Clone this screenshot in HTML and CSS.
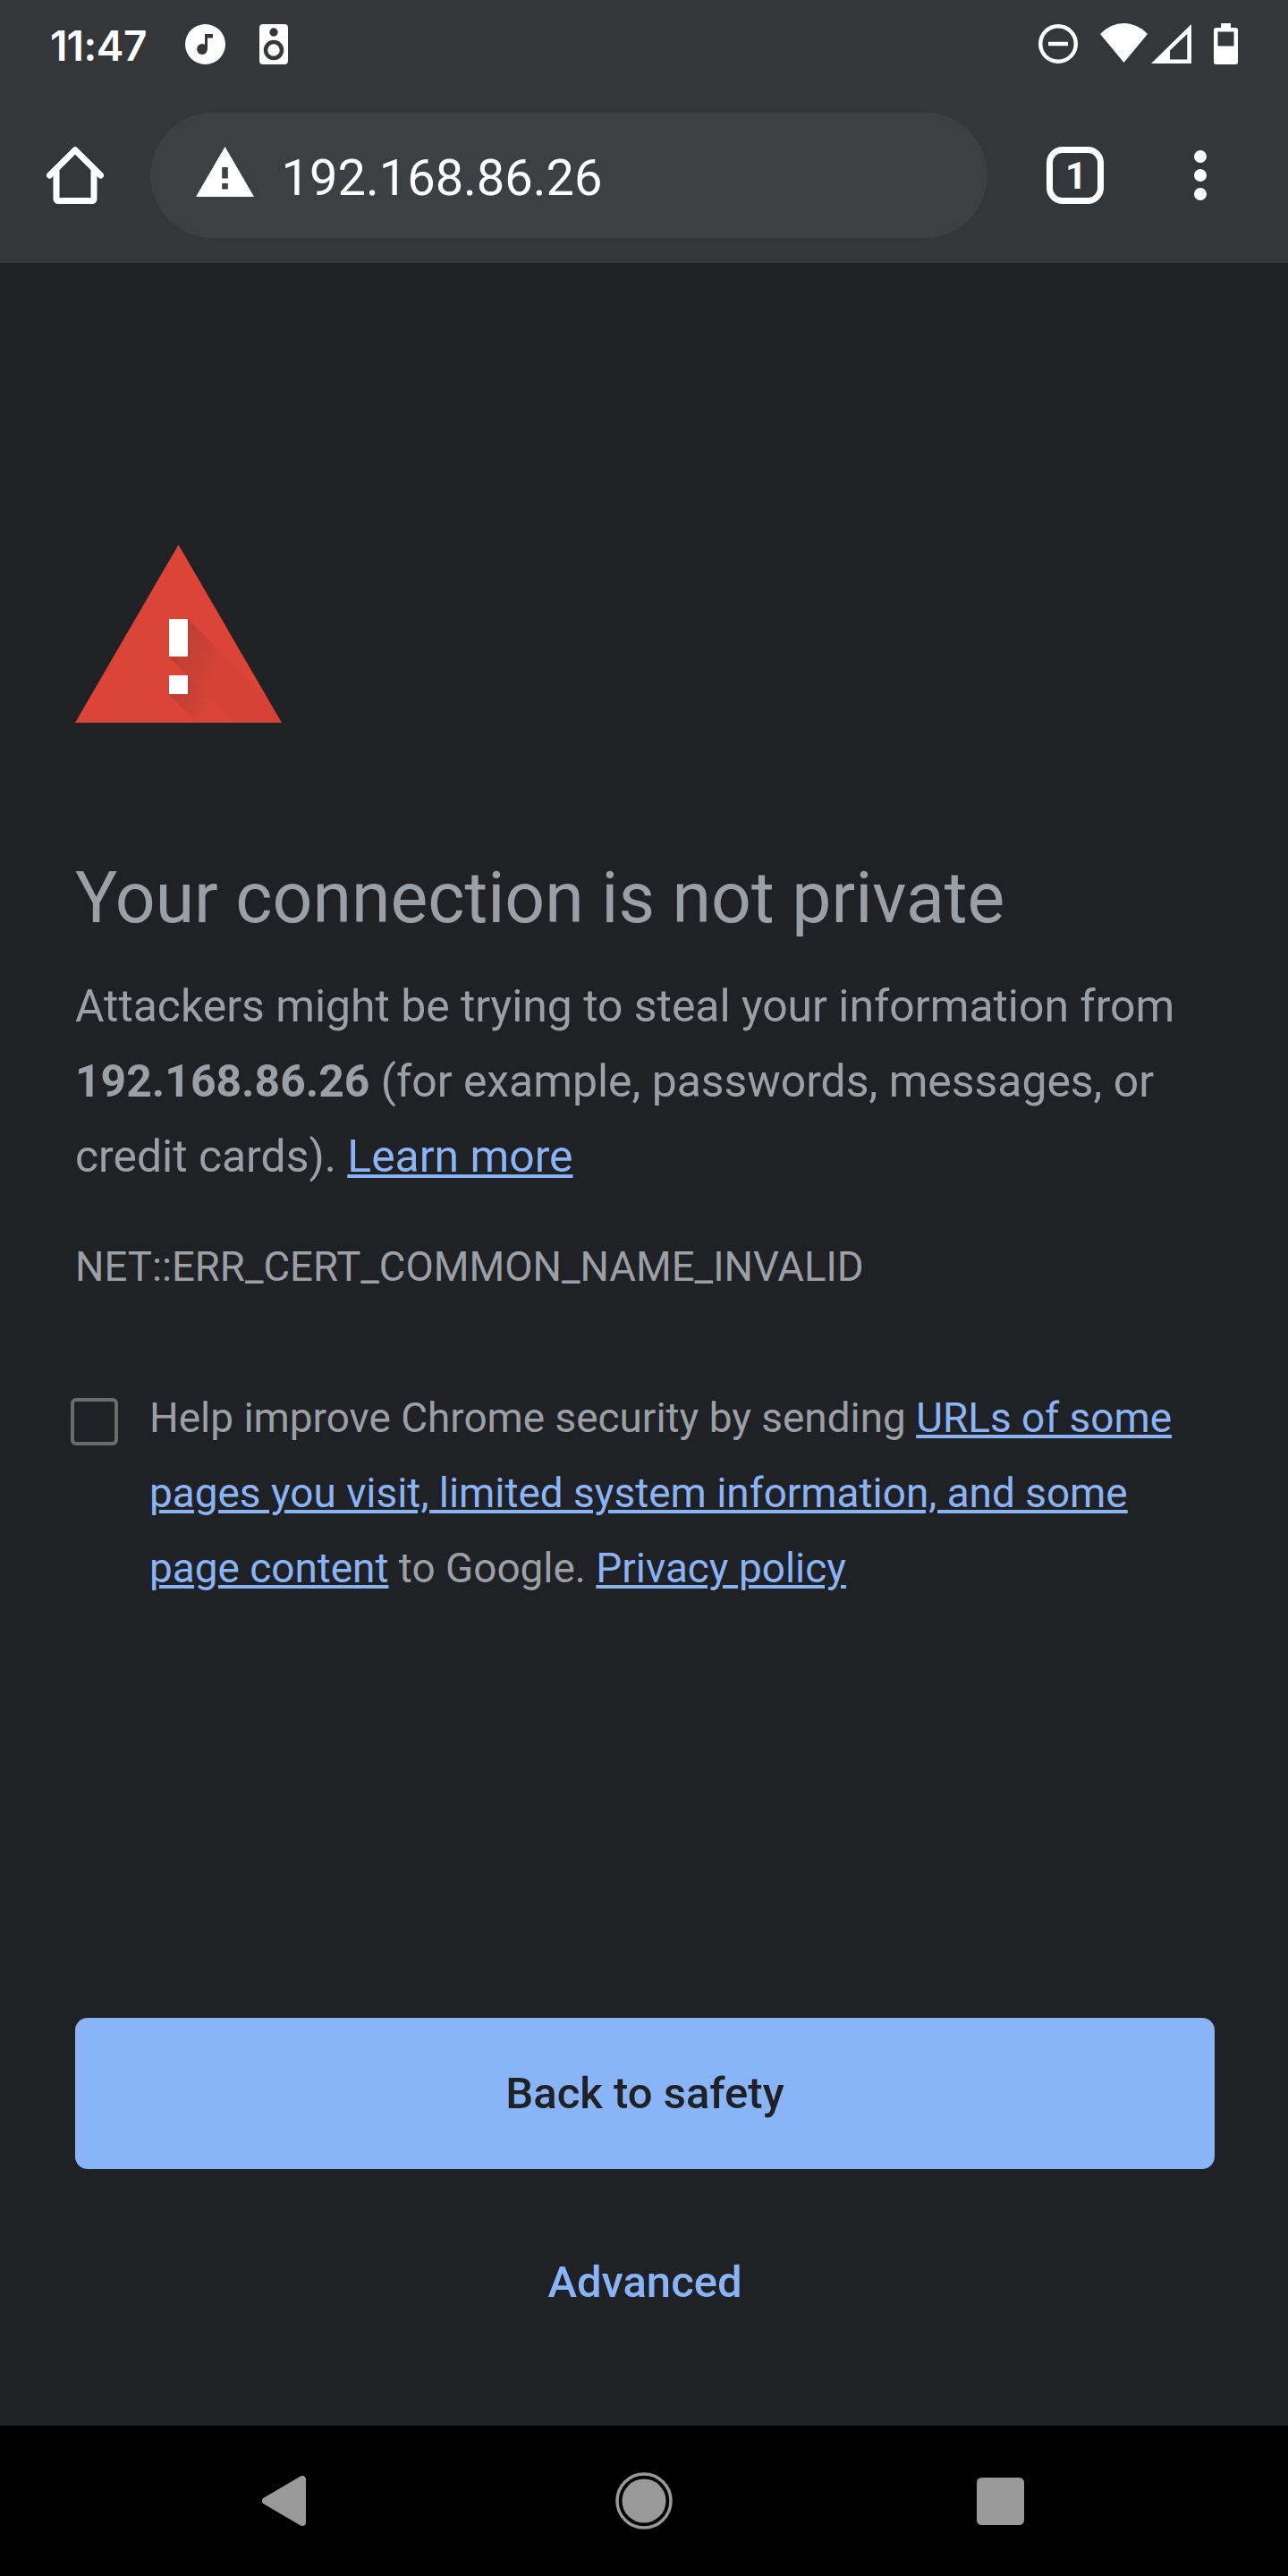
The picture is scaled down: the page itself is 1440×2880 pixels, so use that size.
FILE: index.html
```html
<!DOCTYPE html>
<html lang="en">
<head>
<meta charset="utf-8">
<title>Privacy error</title>
<link rel="stylesheet" href="styles.css">
</head>
<body>
<header class="chrome">
  <div class="status">
    <span class="clock"><span class="ones">1</span>1:47</span>
    <svg class="note" width="45" height="45" viewBox="0 0 45 45"><circle cx="22.500" cy="22.500" r="22.500" fill="#fff"/><path fill="#35363a" d="M22 11h9v4.500h-6V28h-3z"/><circle cx="19" cy="28" r="5.900" fill="#35363a"/></svg>
    <svg class="speaker" width="32" height="45" viewBox="0 0 32 45"><rect width="32" height="45" rx="4" fill="#fff"/><circle cx="16" cy="9" r="4.700" fill="#35363a"/><circle cx="16" cy="29" r="9" fill="#fff" stroke="#35363a" stroke-width="4.500"/></svg>
    <svg class="dnd" width="44" height="44" viewBox="0 0 44 44"><circle cx="22" cy="22" r="19.800" fill="none" stroke="#fff" stroke-width="4.400"/><path d="M11 22h22" stroke="#fff" stroke-width="4.500"/></svg>
    <svg class="wifi" width="53" height="44" viewBox="0 0 53 44"><path fill="#fff" d="M0 12Q12 0 26.500 0T53 12L26.500 44z"/></svg>
    <svg class="signal" width="45" height="45" viewBox="0 0 45 45"><path fill="#fff" fill-rule="evenodd" d="M45 0v44H0zM40.300 11L21 29.500V39.500h19.300z"/></svg>
    <svg class="battery" width="27" height="46" viewBox="0 0 27 46"><path fill="#fff" fill-rule="evenodd" d="M8 0h11v5h5.500a2.500 2.500 0 0 1 2.500 2.500v36a2.500 2.500 0 0 1-2.500 2.500h-22A2.500 2.500 0 0 1 0 43.500v-36A2.500 2.500 0 0 1 2.500 5H8zM4.500 9.500v16h18v-16z"/></svg>
  </div>
  <div class="toolbar">
    <svg class="home" width="64" height="64" viewBox="0 0 64 64" fill="none" stroke="#fff" stroke-width="7" stroke-linecap="round" stroke-linejoin="round"><path d="M3.500 32L32 3.800L60.500 32" /><path d="M11 26v32.500a2 2 0 0 0 2 2h38a2 2 0 0 0 2-2V26"/></svg>
    <div class="omnibox">
      <svg width="65" height="56" viewBox="0 0 65 56"><path fill="#fff" fill-rule="evenodd" d="M32.500 0L65 56H0zM29.200 23v12.500h6.600V23zM29.200 41v6.500h6.600V41z"/></svg>
      <span class="url">192.168.86.26</span>
    </div>
    <div class="tabs">1</div>
    <svg class="menu" width="14" height="56" viewBox="0 0 14 56" fill="#fff"><circle cx="7" cy="7" r="7"/><circle cx="7" cy="28" r="7"/><circle cx="7" cy="49" r="7"/></svg>
  </div>
</header>
<main class="page">
  <svg class="alert" width="231" height="199" viewBox="0 0 231 199">
    <defs>
      <clipPath id="tri"><path d="M115.500 0L231 199H0z"/></clipPath>
      <linearGradient id="shadeA" gradientUnits="userSpaceOnUse" x1="105" y1="83" x2="171" y2="113"><stop offset="0" stop-color="#3e2723" stop-opacity=".25"/><stop offset="1" stop-color="#3e2723" stop-opacity=".04"/></linearGradient>
      <linearGradient id="shadeB" gradientUnits="userSpaceOnUse" x1="105" y1="146" x2="156" y2="176"><stop offset="0" stop-color="#3e2723" stop-opacity=".25"/><stop offset="1" stop-color="#3e2723" stop-opacity="0"/></linearGradient>
    </defs>
    <g clip-path="url(#tri)">
      <path fill="#db4437" d="M0 0h231v199H0z"/>
      <path fill="url(#shadeA)" d="M126 83L242 199H178.500L105 125.500z"/>
      <path fill="url(#shadeB)" d="M126 146.500L178.500 199H136.500L105 167.500z"/>
    </g>
    <path fill="#fff" d="M105 83h21v42h-21zM105 146h21v21h-21z"/>
  </svg>
  <h1 class="title">Your connection is not private</h1>
  <p class="lead">Attackers might be trying to steal your information from <strong>192.168.86.26</strong> (for example, passwords, messages, or credit cards). <a>Learn more</a></p>
  <div class="code">NET::ERR_CERT_COMMON_NAME_INVALID</div>
  <div class="optin">
    <span class="checkbox"></span>
    <p class="optin-text">Help improve Chrome security by sending <a>URLs of some pages you visit, limited system information, and some page content</a> to Google. <a>Privacy policy</a></p>
  </div>
  <div class="actions">
    <div class="button primary">Back to safety</div>
    <div class="button">Advanced</div>
  </div>
</main>
<nav class="navbar">
  <svg width="49" height="56" viewBox="0 0 49 56"><path d="M45 4v48L4 28z" fill="#999" stroke="#999" stroke-width="8" stroke-linejoin="round"/></svg>
  <svg class="home-key" width="64" height="64" viewBox="0 0 64 64"><circle cx="32" cy="32" r="30" fill="none" stroke="#999" stroke-width="3.500"/><circle cx="32" cy="32" r="24.500" fill="#999"/></svg>
  <svg width="53" height="53" viewBox="0 0 53 53"><rect width="53" height="53" rx="5.500" fill="#999"/></svg>
</nav>
</body>
</html>
```
FILE: styles.css
```css
* { box-sizing: border-box; }
body {
  margin: 0;
  width: 1440px;
  height: 2880px;
  display: flex;
  flex-direction: column;
  background: #202124;
  color: #9aa0a6;
  font-family: Roboto, sans-serif;
}
svg { display: block; flex: none; }
.chrome { height: 294px; background: #35363a; color: #fff; }
.status { height: 98px; display: flex; align-items: flex-start; padding: 26px 56px 0 56px; }
.clock { width: 151px; font: 600 46px/46px Inter, sans-serif; letter-spacing: -0.4px; white-space: nowrap; margin-top: 2px; }
.ones { letter-spacing: -1px; }
.note, .speaker, .dnd, .signal { margin-top: 1px; }
.speaker { margin-left: 38px; }
.dnd { margin-left: auto; }
.wifi { margin-left: 25px; }
.signal { margin-left: 4px; }
.battery { margin-left: 25px; }
.toolbar { height: 196px; display: flex; align-items: center; padding: 0 91px 0 52px; }
.omnibox {
  width: 936px;
  height: 140px;
  margin-left: 52px;
  padding-left: 51px;
  border-radius: 70px;
  background: #3c4043;
  display: flex;
  align-items: center;
}
.omnibox svg { margin-top: -8px; }
.url { margin-left: 30.5px; font-size: 56px; line-height: 66px; margin-top: 6px; }
.tabs {
  width: 64px;
  height: 64px;
  margin-left: 66px;
  padding: 1px 0 0 2px;
  border: 7px solid #fff;
  border-radius: 18px;
  font-weight: 700;
  font-size: 42px;
  line-height: 50px;
  text-align: center;
}
.menu { margin-left: auto; }
.page { height: 2418px; padding: 315px 82px 0 84px; }
.title { margin: 140px 0 0; font-weight: 400; font-size: 78.75px; line-height: 112px; }
.lead { margin: 23px 0 0; font-size: 49.875px; line-height: 84px; }
.lead strong { font-weight: 700; }
.page a { color: #8ab4f8; text-decoration: underline; text-decoration-thickness: 4px; text-underline-offset: 3px; }
.code { margin-top: 39.5px; font-size: 45.5px; line-height: 84px; }
.optin { display: flex; margin: 84.5px 0 0 -5px; }
.checkbox { flex: none; width: 53px; height: 53px; margin-top: 20px; border: 4px solid #6b6b6b; border-radius: 6px; }
.optin-text { margin: 0 0 0 35px; font-size: 45.9px; line-height: 84px; }
.actions { margin-top: 461px; display: flex; flex-direction: column; gap: 42px; }
.button { height: 169px; border-radius: 14px; color: #8ab4f8; font-weight: 500; font-size: 49px; line-height: 169px; text-align: center; }
.primary { background: #8ab4f8; color: #202124; }
.navbar { height: 168px; background: #000; display: flex; align-items: center; padding-left: 293px; }
.home-key { margin: 0 339.5px 0 346px; }
```
